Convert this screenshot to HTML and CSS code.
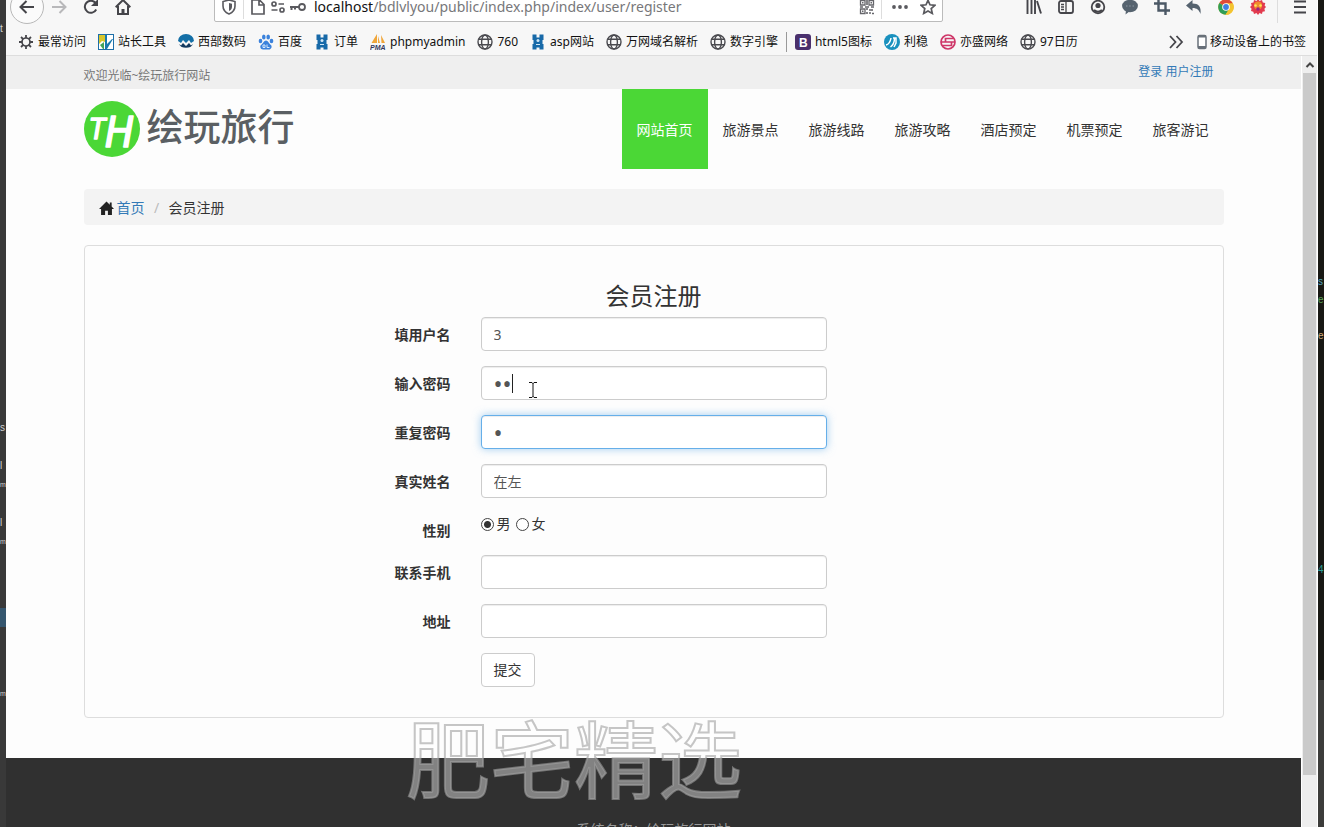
FILE: index.html
```html
<!DOCTYPE html>
<html lang="zh-CN">
<head>
<meta charset="utf-8">
<title>会员注册</title>
<link rel="stylesheet" href="styles.css">
</head>
<body>
<svg width="0" height="0" class="defs">
  <defs>
    <symbol id="globe" viewBox="0 0 16 16"><g fill="none" stroke="#4a4a4f" stroke-width="1.4"><circle cx="8" cy="8" r="7"/><ellipse cx="8" cy="8" rx="3.4" ry="7"/><path d="M1.6 5.3h12.8M1.6 10.7h12.8"/></g></symbol>
    <symbol id="tower" viewBox="0 0 16 16"><path fill="#1769a8" d="M2.500 .5h4v3h3v-3h4v5.500h-1v4h1v5.500h-4v-2h-3v2h-4V10h1V6h-1z"/><circle cx="8" cy="6.500" r="1.500" fill="#cfe6f5"/><path d="M6 10.500h4" stroke="#cfe6f5"/></symbol>
  </defs>
</svg>
<div class="desktop">
  <div class="editor editor-left" aria-hidden="true">
    <span class="l1">t</span><span class="l22">s</span><span class="l24">l</span><span class="l25 wide">m</span><span class="l27">l</span><span class="l28 wide">m</span><span class="l32 selected"></span><span class="l36 wide">m</span>
  </div>

  <div class="browser">
    <div class="toolbar">
      <button class="tool back" aria-label="后退"><svg viewBox="0 0 16 16"><path d="M15 8H2M7.5 2L1.5 8l6 6" fill="none" stroke="#45454a" stroke-width="2"/></svg></button>
      <button class="tool" aria-label="前进"><svg viewBox="0 0 16 16"><path d="M1 8h13M8.5 2l6 6-6 6" fill="none" stroke="#b8b8ba" stroke-width="2"/></svg></button>
      <button class="tool" aria-label="刷新"><svg viewBox="0 0 16 16"><path d="M13.2 10.5A6 6 0 1 1 12.5 4" fill="none" stroke="#45454a" stroke-width="2"/><path d="M15 0v7H8z" fill="#45454a"/></svg></button>
      <button class="tool" aria-label="主页"><svg viewBox="0 0 16 16"><path d="M.7 8.2L8 1l7.300 7.200M3 7v8h10V7" fill="none" stroke="#45454a" stroke-width="2"/><path d="M6.500 15v-5h3v5z" fill="#45454a"/></svg></button>
      <div class="urlbar">
        <svg class="i16" viewBox="0 0 16 16"><path d="M8 1l6 1.500V7c0 4-2.500 6.500-6 8-3.500-1.500-6-4-6-8V2.500z" fill="none" stroke="#5a5a5f" stroke-width="1.600"/><path d="M8 4l3 .7V7.500c0 2-1 3.500-3 4.500z" fill="#5a5a5f"/></svg>
        <span class="rule"></span>
        <svg class="i16" viewBox="0 0 16 16"><path d="M2 1h7.500L14 5.500V15H2zM9 1v5h5" fill="none" stroke="#5a5a5f" stroke-width="1.700"/></svg>
        <svg class="i16" viewBox="0 0 16 16"><g fill="none" stroke="#5a5a5f" stroke-width="1.700"><circle cx="4" cy="5" r="2"/><circle cx="12" cy="11" r="2"/><path d="M8.500 5H14M1.500 11h6"/></g></svg>
        <svg class="i16" viewBox="0 0 16 16"><path d="M9 8H0M1.500 8v3M5 8v2.500" fill="none" stroke="#5a5a5f" stroke-width="2"/><circle cx="12" cy="8" r="3" fill="none" stroke="#5a5a5f" stroke-width="1.800"/></svg>
        <div class="address"><span class="host">localhost</span>/bdlvlyou/public/index.php/index/user/register</div>
        <svg class="i16" viewBox="0 0 16 16"><g fill="none" stroke="#66666b" stroke-width="1.300"><path d="M1.500 1.500h4.500v4.500H1.500zM10 1.500h4.500v4.500H10zM1.500 10h4.500v4.500H1.500z"/><path d="M8 1v5M1 8h3M6 8h4M12 8h3M8 9v2M8 13v2M10 11h2M13 10v2M10 14h2M13 14.500h2" stroke-width="1.600"/></g><path d="M3 3h1.500v1.500H3zM11.500 3H13v1.500h-1.500zM3 11.500h1.500V13H3z" fill="#66666b"/></svg>
        <span class="rule"></span>
        <svg class="i16" viewBox="0 0 16 16"><g fill="#5a5a5f"><circle cx="2" cy="8" r="1.900"/><circle cx="8" cy="8" r="1.900"/><circle cx="14" cy="8" r="1.900"/></g></svg>
        <svg class="i16 star" viewBox="0 0 16 16"><path d="M8 1.300l2 4.500 4.900.5-3.700 3.200 1.100 4.900L8 11.900l-4.300 2.500 1.100-4.900L1.100 6.300 6 5.800z" fill="none" stroke="#5a5a5f" stroke-width="1.700"/></svg>
      </div>
      <button class="tool" aria-label="书库"><svg viewBox="0 0 16 16"><path d="M1.500 1v14M5.500 1v14M9 1v14M11 2l4 12.500" fill="none" stroke="#45454a" stroke-width="1.900"/></svg></button>
      <button class="tool" aria-label="侧栏"><svg viewBox="0 0 16 16"><rect x="1" y="2" width="14" height="12" rx="2" fill="none" stroke="#45454a" stroke-width="1.800"/><path d="M8 2v12M3 5.500h3M3 8h3M3 10.500h3" stroke="#45454a" stroke-width="1.300"/></svg></button>
      <button class="tool" aria-label="账户"><svg viewBox="0 0 16 16"><circle cx="8" cy="8" r="6.300" fill="none" stroke="#45454a" stroke-width="1.800"/><circle cx="8" cy="6.500" r="2.600" fill="#45454a"/><path d="M4 11q4 3.500 8 0" fill="none" stroke="#45454a" stroke-width="2"/></svg></button>
      <button class="tool" aria-label="聊天"><svg viewBox="0 0 16 16"><ellipse cx="8" cy="7" rx="7.900" ry="6.200" fill="#56636f"/><path d="M4 11l-.5 4.500L8 12z" fill="#56636f"/><path d="M4 7h1.500M7.200 7h1.500M10.500 7H12" stroke="#8d98a2"/></svg></button>
      <button class="tool" aria-label="截图"><svg viewBox="0 0 16 16"><path d="M4.500 0v11.500H16M0 4.500h11.500V16" fill="none" stroke="#4b5865" stroke-width="2.400"/></svg></button>
      <button class="tool" aria-label="撤销"><svg viewBox="0 0 16 16"><path d="M0 6.500L6.500 1v3.500c6 0 9 3 8 10.500-1.500-4-3.500-6-8-6V12z" fill="#56636f"/></svg></button>
      <button class="tool" aria-label="Chrome"><svg viewBox="0 0 16 16"><circle cx="8" cy="8" r="7.800" fill="#f4c430"/><path d="M8 8L1.300 4A7.800 7.800 0 0 1 14.800 4.300z" fill="#df4937"/><path d="M8 8L1.300 4A7.800 7.800 0 0 0 7.500 15.800l4-6z" fill="#2f9e57"/><path d="M8 8V4.300h6.800A7.800 7.800 0 0 1 7.500 15.800l3.800-6z" fill="#f4c430"/><circle cx="8" cy="8" r="3.800" fill="#fff"/><circle cx="8" cy="8" r="2.900" fill="#3e7fe0"/></svg></button>
      <button class="tool" aria-label="扩展"><svg viewBox="0 0 16 16"><path d="M8 0l1.500 2L12 1l.8 2.500 2.500.5-.7 2.500L16 8l-1.600 1.700.6 2.500-2.500.6L12 15l-2.500-1L8 16l-1.500-2L4 15l-.7-2.300L1 12l.6-2.300L0 8l1.600-1.500L1 4l2.500-.5L4 1l2.500 1z" fill="#e23b4e"/><circle cx="8" cy="6.500" r="4" fill="#f08c2c"/><circle cx="5.500" cy="6.500" r="1.300" fill="#ffe45c"/><circle cx="10.500" cy="6.500" r="1.300" fill="#ffe45c"/><circle cx="8" cy="10" r="1.800" fill="#9a2380"/></svg></button>
      <span class="rule tall"></span>
      <button class="tool menu" aria-label="菜单"><svg viewBox="0 0 16 16"><path d="M2 2.500h12M2 8h12M2 13.500h12" stroke="#45454a" stroke-width="2"/></svg></button>
    </div>

    <nav class="bookmarks" aria-label="书签">
      <a href="#"><svg viewBox="0 0 16 16"><circle cx="8" cy="8" r="4" fill="none" stroke="#45454a" stroke-width="1.700"/><path d="M8 1v3M8 12v3M1 8h3M12 8h3M3 3l2.200 2.200M10.800 10.800L13 13M13 3l-2.200 2.200M5.200 10.800L3 13" stroke="#45454a" stroke-width="1.800"/></svg>最常访问</a>
      <a href="#"><svg viewBox="0 0 16 16"><rect x=".5" y=".5" width="15" height="15" fill="#fff" stroke="#1d6ea8"/><path d="M1 1h6v7l-3-1-3 3z" fill="#d8c62c"/><path d="M7 1h2v9l5-5h1l-6 10H7z" fill="#1879ae"/><path d="M2 11l4-3v7H5z" fill="#42a35b"/></svg>站长工具</a>
      <a href="#"><svg viewBox="0 0 16 16"><path d="M0 7a8 7 0 0 1 16 0l-3 2-2-3-3 3-3-3-2 3z" fill="#146fa6"/><path d="M1 10l2 1.500L5 9l3 3 3-3 2 2.500L15 10a7.500 6 0 0 1-14 0z" fill="#12395f"/></svg>西部数码</a>
      <a href="#"><svg viewBox="0 0 16 16"><g fill="#3b82dc"><ellipse cx="2.500" cy="7" rx="1.800" ry="2.300"/><ellipse cx="5.800" cy="3" rx="1.800" ry="2.500"/><ellipse cx="10.200" cy="3" rx="1.800" ry="2.500"/><ellipse cx="13.500" cy="7" rx="1.800" ry="2.300"/><path d="M8 6.500c2 0 3 3 5 4.500 1.500 2 0 4.500-2 4.500H5c-2.500 0-3.500-3-2-4.500C5 9.500 6 6.500 8 6.500z"/></g><path d="M5 11h2v2.500H5zM9 10.500v3h2.500" fill="none" stroke="#d8e8fb"/></svg>百度</a>
      <a href="#"><svg><use href="#tower"/></svg>订单</a>
      <a href="#"><svg viewBox="0 0 16 16"><path d="M7 0v9H1.500zM8 2l2 7H8zM11 1l4 8h-3.500z" fill="#f0a63a"/><text x="0" y="15.500" class="pma">PMA</text></svg>phpmyadmin</a>
      <a href="#"><svg><use href="#globe"/></svg>760</a>
      <a href="#"><svg><use href="#tower"/></svg>asp网站</a>
      <a href="#"><svg><use href="#globe"/></svg>万网域名解析</a>
      <a href="#"><svg><use href="#globe"/></svg>数字引擎</a>
      <span class="divider"></span>
      <a href="#"><svg viewBox="0 0 16 16"><rect width="16" height="16" rx="3" fill="#4a306d"/><text x="4" y="12.500" class="bee">B</text></svg>html5图标</a>
      <a href="#"><svg viewBox="0 0 16 16"><circle cx="8" cy="8" r="8" fill="#1a91be"/><path d="M2 11q4-1 5-7M6.500 13q4-3 4-9M9 4h3v5l-2 4" fill="none" stroke="#fff" stroke-width="1.500"/></svg>利稳</a>
      <a href="#"><svg viewBox="0 0 16 16"><g fill="none" stroke="#ce3668" stroke-width="1.700"><circle cx="8" cy="8" r="7"/><path d="M13 4.500H5.500V8h6v3.500H3M1 8h5M11 8h4"/></g></svg>亦盛网络</a>
      <a href="#"><svg><use href="#globe"/></svg>97日历</a>
      <button class="more" aria-label="更多书签"><svg viewBox="0 0 16 16"><path d="M2 2l5.500 6L2 14M8.500 2L14 8l-5.500 6" fill="none" stroke="#45454a" stroke-width="1.800"/></svg></button>
      <a href="#" class="mobile"><svg viewBox="0 0 12 16"><rect x="2" y="1.500" width="8" height="13" rx="1.500" fill="#fff" stroke="#687079" stroke-width="1.500"/><path d="M2 2.500h8M2 13h8" stroke="#687079" stroke-width="2"/></svg>移动设备上的书签</a>
    </nav>

    <div class="viewport">
      <div class="page">
        <div class="topbar"><div class="container">
          <span class="welcome">欢迎光临~绘玩旅行网站</span>
          <span class="account"><a href="#">登录</a> <a href="#">用户注册</a></span>
        </div></div>

        <header class="container site-header">
          <a class="brand" href="#">
            <svg class="mark" viewBox="0 0 56 56"><circle cx="28" cy="28" r="28" fill="#4bd736"/><text x="6" y="38" class="mark-t">T</text><text x="21" y="46" class="mark-h">H</text></svg>
            <span>绘玩旅行</span>
          </a>
          <nav class="site-nav">
            <a class="active" href="#">网站首页</a><a href="#">旅游景点</a><a href="#">旅游线路</a><a href="#">旅游攻略</a><a href="#">酒店预定</a><a href="#">机票预定</a><a href="#">旅客游记</a>
          </nav>
        </header>

        <main class="container">
          <div class="breadcrumb">
            <svg viewBox="0 0 16 16"><path d="M8 .5L0 8.500h2.200V15h4.300v-4.500h3V15h4.300V8.500H16l-2.500-2.600V1.500h-2v2.400z" fill="#222"/></svg>
            <a href="#">首页</a><span class="slash">/</span><span>会员注册</span>
          </div>

          <form class="panel" onsubmit="return false">
            <h1>会员注册</h1>
            <div class="row"><label for="user">填用户名</label><input id="user" class="field" type="text" value="3"></div>
            <div class="row"><label for="pw">输入密码</label><div class="field-wrap"><input id="pw" class="field" type="password" value="12"><span class="caret"></span><svg class="pointer" viewBox="0 0 8 16"><path d="M0 .5h3L4 1.500 5 .5h3M4 1v14M0 15.500h3l1-1 1 1h3" fill="none" stroke="#111"/></svg></div></div>
            <div class="row"><label for="pw2">重复密码</label><input id="pw2" class="field focused" type="password" value="1"></div>
            <div class="row"><label for="name">真实姓名</label><input id="name" class="field" type="text" value="在左"></div>
            <div class="row" role="radiogroup" aria-labelledby="sex"><span class="label" id="sex">性别</span><div class="radios"><input id="male" type="radio" name="sex" checked><label for="male">男</label><input id="female" type="radio" name="sex"><label for="female">女</label></div></div>
            <div class="row"><label for="phone">联系手机</label><input id="phone" class="field" type="text"></div>
            <div class="row"><label for="address">地址</label><input id="address" class="field" type="text"></div>
            <div class="row"><button class="submit" type="submit">提交</button></div>
          </form>
        </main>

        <footer>系统名称：绘玩旅行网站</footer>
        <div class="watermark">肥宅精选</div>
      </div>
      <div class="scrollbar" aria-hidden="true">
        <div class="up"><svg viewBox="0 0 10 10"><path d="M1.500 7L5 3.500 8.500 7" fill="none" stroke="#444" stroke-width="2"/></svg></div>
        <div class="thumb"></div>
      </div>
    </div>
  </div>

  <div class="editor editor-right" aria-hidden="true">
    <span class="r16">s</span><span class="r17">e</span><span class="r19">e</span><span class="r32">4</span>
  </div>
</div>
</body>
</html>
```

FILE: styles.css
```css
* { box-sizing: border-box; }
body { margin: 0; font-family: "Noto Sans", "Noto Sans CJK SC", sans-serif; font-size: 14px; line-height: 20px; color: #333; }
a { color: #337ab7; text-decoration: none; }
button { font: inherit; }
.defs { position: absolute; }
.desktop { display: grid; grid-template-columns: 6px minmax(0, 1fr) 6px; height: 100vh; overflow: hidden; }

/* Editor edges behind the browser window */
.editor { display: grid; grid-template-columns: 100%; align-content: start; overflow: hidden; font-family: "Liberation Sans", sans-serif; font-size: 10px; }
.editor-left { grid-auto-rows: 19px; line-height: 19px; background: #393939; color: #d0d0d0; }
.editor-right { grid-auto-rows: 18px; line-height: 18px; padding-top: 3px; background: linear-gradient(#181814 0 680px, #3c3c3a 680px); }
.wide { font-size: 7px; }
.l1 { grid-row: 2; } .l22 { grid-row: 23; } .l24 { grid-row: 25; } .l25 { grid-row: 26; }
.l27 { grid-row: 28; } .l28 { grid-row: 29; } .l32 { grid-row: 33; } .l36 { grid-row: 37; }
.selected { background: #35566e; }
.r16 { grid-row: 16; color: #58a8bd; } .r17 { grid-row: 17; color: #5ba356; }
.r19 { grid-row: 19; color: #cfa878; } .r32 { grid-row: 32; color: #2c9c94; }

/* Browser window */
.browser { display: flex; flex-direction: column; min-height: 0; background: #f7f7f7; border-right: 1px solid #fff; }
.toolbar { display: flex; align-items: center; height: 14px; margin-bottom: 14px; padding: 0 1px 0 5px; flex: none; }
.tool { display: flex; align-items: center; justify-content: center; flex: none; width: 32px; height: 32px; padding: 0; border: 0; background: none; }
.tool svg, .i16 { width: 16px; height: 16px; flex: none; }
.back { width: 34px; height: 34px; margin: 0 -1px; border: 1px solid #b8b8b8; border-radius: 50%; background: #fbfbfb; }
.menu { margin-left: 6px; }
.urlbar { display: flex; align-items: center; gap: 4px; flex: 1; min-width: 0; height: 30px; margin: 0 75px; padding: 0 6px; border: 1px solid #bbb; border-radius: 2px; background: #fff; }
.address { flex: 1; min-width: 0; margin-left: 4px; white-space: nowrap; color: #77777a; }
.host { color: #111; }
.rule { width: 1px; height: 24px; margin: 0 2px; background: #ddd; flex: none; }
.address ~ .rule { margin: 0 6px 0 2px; }
.star { margin-left: 8px; }
.tall { height: 32px; margin: 0 0 0 3px; }
.bookmarks { display: flex; align-items: center; gap: 12px; height: 28px; padding: 0 11px 0 12px; border-bottom: 1px solid #ddd; font-size: 12px; white-space: nowrap; flex: none; }
.bookmarks a { display: flex; align-items: center; gap: 4px; color: #111; }
.bookmarks svg { width: 16px; height: 16px; flex: none; }
.divider { width: 1px; height: 20px; margin: 0 -4px; background: #999; }
.more { margin-left: auto; padding: 0; border: 0; background: none; display: flex; }
.bookmarks .mobile { gap: 2px; }
.bookmarks .mobile svg { width: 12px; }
.pma { font: italic bold 7px "Liberation Sans", sans-serif; fill: #33375f; }
.bee { font: bold 12px "Liberation Sans", sans-serif; fill: #fff; }

.viewport { display: flex; flex: 1; min-height: 0; }
.page { position: relative; flex: 1; min-width: 0; overflow: hidden; background: #fdfdfd; }
.scrollbar { display: flex; flex-direction: column; width: 16px; padding: 0 1px; background: #eee; border-left: 1px solid #fff; flex: none; }
.up { display: flex; align-items: center; justify-content: center; height: 17px; flex: none; }
.up svg { width: 10px; height: 10px; flex: none; }
.thumb { height: 91%; margin-bottom: auto; background: #cacaca; }

/* Site */
.container { max-width: 1170px; margin: 0 auto; padding: 0 15px; }
.topbar { background: #efefef; font-size: 12px; height: 33px; }
.topbar .container { display: flex; justify-content: space-between; }
.welcome { color: #777; padding-top: 10px; }
.account { padding: 6px 10px 0 0; }
.site-header { display: flex; justify-content: space-between; margin-bottom: 20px; }
.brand { display: flex; align-items: flex-start; gap: 7px; padding-top: 12px; color: #5a5f63; font-size: 37px; font-weight: 500; line-height: 52px; }
.mark { width: 56px; height: 56px; }
.mark-t, .mark-h { fill: #fff; stroke: #fff; stroke-width: 1.5px; stroke-linejoin: round; }
.mark-t { font: italic 28px "DejaVu Sans Condensed", "DejaVu Sans", sans-serif; }
.mark-h { font: italic 43px "DejaVu Sans Condensed", "DejaVu Sans", sans-serif; }
.site-nav { display: flex; height: 80px; line-height: 82px; }
.site-nav a { padding: 0 15px; color: #333; }
.site-nav .active { background: #4bd736; color: #fff; }
.breadcrumb { display: flex; align-items: center; padding: 9px 15px 7px; margin-bottom: 20px; border-radius: 4px; background: #f3f3f3; }
.breadcrumb svg { width: 15px; height: 15px; margin-right: 3px; }
.slash { width: 24px; text-align: center; color: #bbb; }
.panel { padding: 15px; border: 1px solid #ddd; border-radius: 4px; margin-bottom: 40px; }
h1 { margin: 22px 0 8px; font-size: 24px; font-weight: 400; line-height: 26px; text-align: center; }
.row { display: grid; grid-template-columns: 1fr 346px 1fr; gap: 30px; margin-bottom: 15px; align-items: start; }
.row > label, .label { padding-top: 8px; line-height: 19px; text-align: right; font-weight: 700; }
.field { display: block; width: 100%; height: 34px; padding: 6px 12px; border: 1px solid #ccc; border-radius: 4px; background: #fff; box-shadow: inset 0 1px 1px rgba(0, 0, 0, .075); color: #555; font: inherit; outline: 0; }
.field[type="password"] { font-size: 24px; }
.focused { border-color: #66afe9; box-shadow: inset 0 1px 1px rgba(0, 0, 0, .075), 0 0 8px rgba(102, 175, 233, .6); }
.field-wrap { position: relative; }
.caret { position: absolute; left: 31px; top: 8px; width: 1px; height: 19px; background: #222; }
.pointer { position: absolute; left: 48px; top: 16px; width: 8px; height: 16px; }
.radios { display: flex; align-items: center; gap: 3px; height: 22px; }
.radios input { appearance: none; width: 13px; height: 13px; margin: 0; border: 1px solid #444; border-radius: 50%; background: #fff; }
.radios input:checked { background: radial-gradient(#333 0 3px, #fff 4px); }
.radios label { margin-right: 2px; }
.submit { grid-column: 2; justify-self: start; height: 34px; padding: 6px 12px; border: 1px solid #ccc; border-radius: 4px; background: #fff; color: #333; line-height: 20px; }
footer { height: 140px; padding-top: 62px; background: #303030; color: #999; text-align: center; }
.watermark { position: absolute; left: 400px; top: 640px; font-family: "Noto Sans CJK SC", sans-serif; font-size: 84px; line-height: 120px; font-weight: 400; color: rgba(255, 255, 255, .4); -webkit-text-stroke: 2px rgba(160, 160, 160, .6); pointer-events: none; }
```
